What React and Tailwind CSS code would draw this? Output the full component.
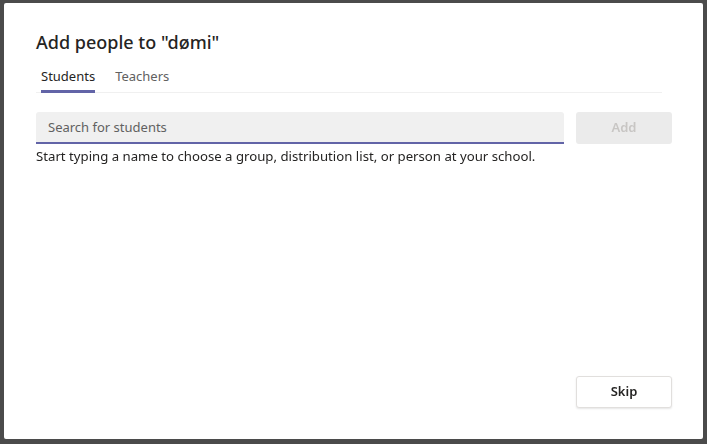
import React, { useState } from 'react';

const App = () => {
    const [tab, setTab] = useState('students');
    const [query, setQuery] = useState('');

    return (
        <div className="w-[707px] h-[444px] bg-[#4b4b4b] pt-[3px] pl-[4px]" style={{ fontFamily: '"Noto Sans", "Open Sans", sans-serif' }}>
            <div className="w-[699px] h-[436px] bg-white rounded-[2px] flex flex-col pl-[32px] pr-[31px] pt-[27px] pb-[31px]">
                <h1 className="text-[18px] leading-[24px] font-medium text-[#252423]">Add people to "dømi"</h1>

                <div className="mt-[9px] flex border-b border-[#f0f0f0] mr-[10px] pl-[5px] gap-[20px]">
                    {[['students', 'Students'], ['teachers', 'Teachers']].map(([key, label]) => (
                        <button
                            key={key}
                            onClick={() => setTab(key)}
                            className={`text-[13px] leading-[20px] pt-[3px] pb-[4px] border-b-[3px] -mb-px ${tab === key ? 'border-[#6264a7] text-[#252423]' : 'border-transparent text-[#616161]'}`}
                        >
                            {label}
                        </button>
                    ))}
                </div>

                <div className="mt-[19px] flex gap-[12px]">
                    <input
                        autoFocus
                        value={query}
                        onChange={(e) => setQuery(e.target.value)}
                        placeholder={tab === 'students' ? 'Search for students' : 'Search for teachers'}
                        className="w-[528px] h-[32px] bg-[#f0f0f0] rounded-t-[3px] border-b-2 border-[#6264a7] px-[12px] text-[13px] text-[#252423] placeholder-[#616161] outline-none caret-black"
                    />
                    <button className="w-[96px] h-[32px] bg-[#ebebeb] rounded-[3px] text-[13px] font-semibold text-[#c8c6c4]">Add</button>
                </div>
                <p className="mt-[2px] text-[13.2px] leading-[20px] text-[#252423]">
                    Start typing a name to choose a group, distribution list, or person at your school.
                </p>

                <div className="mt-auto flex justify-end">
                    <button className="w-[96px] h-[32px] bg-white border border-[#e1dfdd] rounded-[3px] shadow-[0_1px_2px_rgba(0,0,0,0.1)] text-[13px] font-semibold text-[#252423]">Skip</button>
                </div>
            </div>
        </div>
    );
};

export default App;
